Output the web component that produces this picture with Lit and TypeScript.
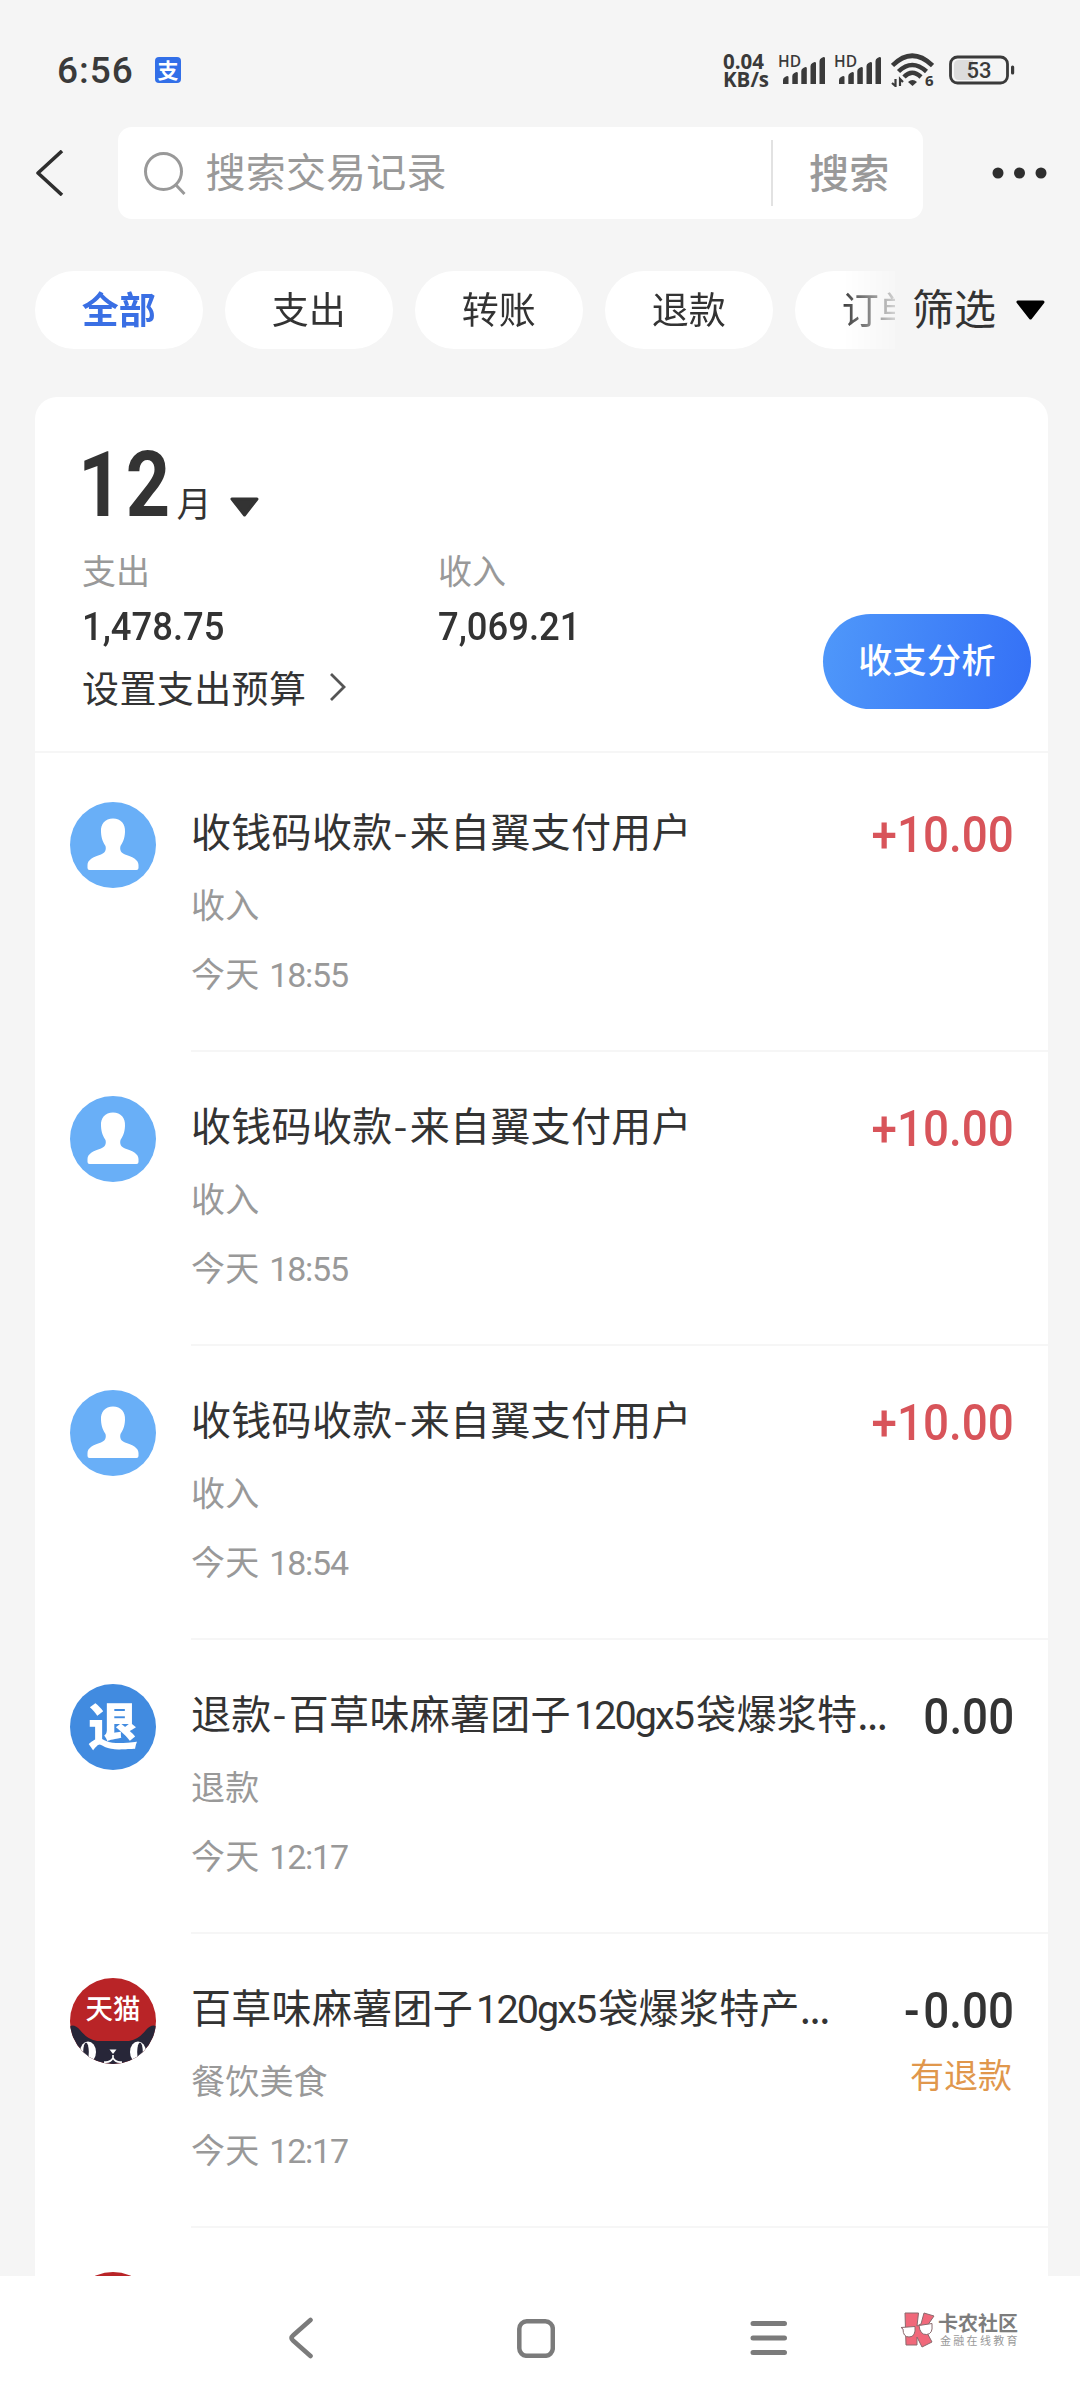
import { LitElement, html, svg, css, nothing } from "lit";
import { customElement, property } from "lit/decorators.js";

interface Bill {
  icon: "person" | "refund" | "tmall";
  title: unknown;
  category: string;
  time: string;
  amount: string;
  income?: boolean;
  note?: string;
}

const dash = html`<span class="dash">-</span>`;
const spec = html`<span class="latin">120gx5</span>`;
const dots = html`<span class="dots">...</span>`;
const collected = html`收钱码收款${dash}来自翼支付用户`;

const bills: Bill[] = [
  { icon: "person", title: collected, category: "收入", time: "18:55", amount: "+10.00", income: true },
  { icon: "person", title: collected, category: "收入", time: "18:55", amount: "+10.00", income: true },
  { icon: "person", title: collected, category: "收入", time: "18:54", amount: "+10.00", income: true },
  { icon: "refund", title: html`退款${dash}百草味麻薯团子${spec}袋爆浆特${dots}`, category: "退款", time: "12:17", amount: "0.00" },
  { icon: "tmall", title: html`百草味麻薯团子${spec}袋爆浆特产${dots}`, category: "餐饮美食", time: "12:17", amount: "-0.00", note: "有退款" },
  { icon: "tmall", title: "", category: "", time: "", amount: "" },
];

@customElement("bill-icon")
export class BillIcon extends LitElement {
  @property() kind: Bill["icon"] = "person";

  static styles = css`
    :host { display: block; width: 86px; height: 86px; }
    svg { display: block; }
    .badge {
      display: flex; align-items: center; justify-content: center;
      width: 86px; height: 86px; border-radius: 50%;
      background: #418be0; color: #fff;
      font: 900 50px/50px "Noto Sans CJK SC", sans-serif;
      box-sizing: border-box; padding-bottom: 8px;
    }
    .brand { font: 500 27.5px "Noto Sans CJK SC", sans-serif; fill: #fff; }
  `;

  render() {
    if (this.kind === "refund") return html`<div class="badge">退</div>`;
    if (this.kind === "tmall") {
      return html`<svg width="86" height="86" viewBox="0 0 86 86">
        <clipPath id="disc"><circle cx="43" cy="43" r="43" /></clipPath>
        <g clip-path="url(#disc)">
          <rect width="86" height="86" fill="#b92427" />
          <path d="M0 48Q5 46 10 52Q18 62 27 63H59Q68 62 76 52Q81 46 86 48V86H0Z" fill="#272638" />
          <ellipse cx="18" cy="74" rx="8" ry="10.5" fill="#fff" />
          <ellipse cx="16" cy="74" rx="2.8" ry="9.5" fill="#272638" />
          <ellipse cx="68" cy="74" rx="8" ry="10.5" fill="#fff" />
          <ellipse cx="70" cy="74" rx="2.8" ry="9.5" fill="#272638" />
          <path d="M39.5 71.5H46.5L43 76Z" fill="#fff" />
          <path d="M43 77V80Q40 85 34 84M43 80Q46 85 52 84" fill="none" stroke="#fff" stroke-width="1.6" />
        </g>
        ${svg`<text class="brand" x="43" y="41" text-anchor="middle">天猫</text>`}
      </svg>`;
    }
    return html`<svg width="86" height="86" viewBox="0 0 86 86">
      <circle cx="43" cy="43" r="43" fill="#69aff7" />
      <path d="M43 16.500C51 16.500 55.500 22 55 30C54.700 37 52.500 41 50.500 44C49.500 48 51 51 55 52.500C63 55 68.500 58 68.500 63V66Q68.500 68 66.500 68H19.500Q17.500 68 17.500 66V63C17.500 58 23 55 31 52.500C35 51 36.500 48 35.500 44C33.500 41 31.300 37 31 30C30.500 22 35 16.500 43 16.500Z" fill="#fff" />
    </svg>`;
  }
}

@customElement("bill-row")
export class BillRow extends LitElement {
  @property({ attribute: false }) bill!: Bill;

  static styles = css`
    :host { display: flex; height: 294px; padding-left: 35px; gap: 35px; }
    bill-icon { margin-top: 44px; flex: none; }
    .body {
      flex: 1; display: flex; justify-content: space-between;
      box-sizing: border-box; border-bottom: 2px solid #f6f6f6;
      padding: 44px 36px 0 0; white-space: nowrap;
    }
    .info, .money { display: flex; flex-direction: column; }
    .title { font-size: 40px; line-height: 56px; letter-spacing: 0.3px; color: #333; }
    .dash { margin: 0 2px 0 1px; }
    .dots { letter-spacing: -1.4px; }
    .latin { font-family: Roboto, sans-serif; font-size: 39.5px; line-height: 1; letter-spacing: -1.9px; margin: 0 3px 0 3px; }
    .sub { font-size: 34px; line-height: 48px; color: #999; margin-top: 21.5px; letter-spacing: 0.2px; }
    .time { font-family: Roboto, sans-serif; line-height: 1; letter-spacing: -1.2px; margin-left: 2px; }
    .money { align-items: flex-end; padding-top: 3px; }
    .amount {
      font: 500 49.500px/60px Roboto, sans-serif; color: #333;
      transform: scaleX(0.925); transform-origin: right; margin-right: -2px;
    }
    .minus { letter-spacing: 4px; }
    .income { color: #d8545a; }
    .note { font-size: 34px; line-height: 48px; margin-top: 8.5px; color: #e0974c; }
  `;

  render() {
    const b = this.bill;
    const negative = b.amount.startsWith("-");
    return html`
      <bill-icon .kind=${b.icon}></bill-icon>
      <div class="body">
        <div class="info">
          <div class="title">${b.title}</div>
          <div class="sub">${b.category}</div>
          ${b.time ? html`<div class="sub">今天 <span class="time">${b.time}</span></div>` : nothing}
        </div>
        <div class="money">
          <div class="amount ${b.income ? "income" : ""}">${negative
            ? html`<span class="minus">-</span>${b.amount.slice(1)}`
            : b.amount}</div>
          ${b.note ? html`<div class="note">${b.note}</div>` : nothing}
        </div>
      </div>
    `;
  }
}

const triangle = (color: string) => html`<svg class="tri" width="29" height="20" viewBox="0 0 29 20">
  <path d="M2 2H27L14.500 18Z" fill=${color} stroke=${color} stroke-width="3" stroke-linejoin="round" />
</svg>`;

const signal = html`<div class="signal">
  <span class="hd">HD</span>
  <svg width="43" height="27" viewBox="0 0 43 27" fill="#3a3a3a">
    ${[[0, 19], [9.3, 15], [18.3, 10], [27.500, 5], [36.500, 0]].map(
      ([x, y]) => svg`<path d=${`M${x} 27V${y + 4}Q${x} ${y + 2} ${x + 2} ${y + 1}L${x + 4} ${y}Q${x + 5.500} ${y} ${x + 5.500} ${y + 1}V27Z`} />`,
    )}
  </svg>
</div>`;

@customElement("app-root")
export class AppRoot extends LitElement {
  static styles = css`
    :host {
      display: flex; flex-direction: column; width: 1080px; height: 2400px;
      overflow: hidden; background: #f5f5f5; color: #333;
      font-family: "Noto Sans CJK SC", sans-serif;
    }
    svg { display: block; flex: none; }

    .status { display: flex; align-items: center; height: 40px; padding: 50px 65px 0 57px; color: #3a3a3a; }
    .clock { font: 500 37px/40px Roboto, sans-serif; letter-spacing: 1px; width: 98px; padding-top: 1px; }
    .pay {
      width: 26px; height: 26px; border-radius: 4px; background: #326fe8; color: #fff;
      font-size: 21px; font-weight: 700; line-height: 24px; text-align: center;
    }
    .sys { display: flex; align-items: center; margin-left: auto; }
    .rate { font: 700 20.5px/18.500px "Open Sans", sans-serif; width: 55px; white-space: nowrap; }
    .signal { width: 56px; height: 30px; display: grid; }
    .signal > * { grid-area: 1 / 1; }
    .hd { font: 600 15.5px/15px "Open Sans", sans-serif; margin-top: -1px; }
    .signal svg { margin: 2px 0 0 5px; }
    .wifi { margin: 0 15px 0 1px; }
    .band { font: 700 15px "Open Sans", sans-serif; fill: #3a3a3a; stroke: none; }
    .level { font: 500 22px Roboto, sans-serif; fill: #3a3a3a; }

    .top { display: flex; align-items: center; height: 92px; margin-top: 37px; padding: 0 33px 0 35px; }
    .search {
      display: flex; align-items: center; width: 805px; height: 92px; margin-left: 54px;
      box-sizing: border-box; border-radius: 14px; background: #fff; padding-left: 25px; color: #999; font-size: 40px;
    }
    .placeholder { margin-left: 18.5px; flex: 1; letter-spacing: 0.2px; line-height: 56px; padding-bottom: 6px; }
    .go {
      width: 152px; height: 66px; box-sizing: border-box; border-left: 2px solid #e2e2e2; padding-left: 36px;
      font-weight: 500; line-height: 63px; letter-spacing: 0.3px;
    }
    .more { margin-left: auto; }

    .filters { display: flex; align-items: center; height: 78px; margin-top: 52px; padding-left: 35px; }
    .chips {
      display: flex; gap: 22.500px; width: 860px; overflow: hidden;
      -webkit-mask-image: linear-gradient(to right, #000 805px, transparent 872px);
      mask-image: linear-gradient(to right, #000 805px, transparent 872px);
    }
    .chip {
      flex: none; width: 167.500px; height: 78px; border-radius: 39px; background: #fff;
      font-size: 37px; line-height: 74px; text-align: center;
    }
    .active { color: #3a6fe4; font-weight: 700; }
    .filter { display: flex; align-items: center; font-size: 42px; line-height: 78px; margin-left: 17px; }
    .filter span { padding-bottom: 6px; }
    .filter .tri { margin-left: 20px; }

    .card {
      height: 1879px; margin: 48px 32px 0 35px; border-radius: 22px 22px 0 0; overflow: hidden; background: #fff;
    }
    .summary {
      display: flex; align-items: flex-start; height: 356px; box-sizing: border-box;
      border-bottom: 2px solid #f6f6f6; padding: 50px 17px 0 47px; margin-bottom: 5px;
    }
    .figures { flex: 1; }
    .month { display: flex; align-items: flex-end; height: 80px; }
    .digits {
      font: 700 90px/82px Roboto, sans-serif; letter-spacing: 4px; margin-left: -4px;
      transform: scaleX(0.86); transform-origin: left; width: 98.500px; flex: none; white-space: nowrap;
    }
    .unit { font-size: 35px; line-height: 44px; width: 31.5px; padding-bottom: 3px; }
    .month .tri { margin: 0 0 10px 22px; }
    .totals { display: flex; margin-top: 20px; }
    .total { width: 356px; }
    .label { font-size: 34px; line-height: 46px; color: #999; }
    .value {
      font: 500 39.500px/46px Roboto, sans-serif; margin-top: 10.5px;
      transform: scaleX(0.922); transform-origin: left;
    }
    .budget { display: flex; align-items: center; font-size: 37px; line-height: 50px; letter-spacing: 0.4px; margin-top: 12.5px; gap: 21px; }
    .analyse {
      width: 208px; height: 95px; border-radius: 48px; margin-top: 167px;
      background: linear-gradient(100deg, #4f98fa, #3470f6); color: #fff;
      font-size: 34px; font-weight: 500; line-height: 89px; text-align: center; letter-spacing: 0.4px;
    }

    .nav { display: flex; align-items: center; height: 124px; box-sizing: border-box; padding: 0 0 0 287px; background: #fff; }
    .home { margin-left: 202px; }
    .menu { margin-left: 195px; }
    .mark { display: flex; align-items: center; gap: 3px; margin: -16px 0 0 112px; }
    .names { color: #7d7d7d; white-space: nowrap; }
    .name { font-size: 20px; font-weight: 700; line-height: 20px; }
    .motto { font-size: 11px; line-height: 13px; letter-spacing: 2.3px; color: #999; padding-left: 2px; margin-top: 1px; }
  `;

  render() {
    return html`
      <div class="status">
        <div class="clock">6:56</div>
        <div class="pay">支</div>
        <div class="sys">
          <div class="rate">0.04<br />KB/s</div>
          ${signal}${signal}
          <svg class="wifi" width="43" height="34" viewBox="0 0 43 34" fill="none" stroke="#3a3a3a" stroke-width="4.500">
            <path d="M1.500 12.500Q21 -7 41.500 12.500" />
            <path d="M7.500 18.500Q21 5.500 35.500 18.500" />
            <path d="M13 24Q21 15.500 30 24" />
            <path d="M17 29Q21.500 25 26 29L21.500 33Z" fill="#3a3a3a" stroke="none" />
            <path d="M4.500 26V33L1 30M9 33V26L12 29" stroke-width="2.200" />
            <text class="band" x="34" y="33">6</text>
          </svg>
          <svg width="66" height="30" viewBox="0 0 66 30">
            <rect x="1.500" y="2" width="57" height="26" rx="7" fill="none" stroke="#3a3a3a" stroke-width="2.800" />
            <path d="M10 5H24V25H10Q5 25 5 20V10Q5 5 10 5Z" fill="#dcdcdc" />
            <rect x="62" y="10.500" width="3.200" height="9" rx="1.500" fill="#3a3a3a" />
            <text class="level" x="30" y="23" text-anchor="middle">53</text>
          </svg>
        </div>
      </div>

      <div class="top">
        <svg width="29" height="46" viewBox="0 0 29 46" fill="none" stroke="#2e2e2e" stroke-width="3.600">
          <path d="M27 1L3 23L27 45" stroke-linejoin="round" />
        </svg>
        <div class="search">
          <svg width="44" height="44" viewBox="0 0 44 44" fill="none" stroke="#999" stroke-width="3">
            <circle cx="20.500" cy="20.500" r="18" />
            <path d="M32 33L41.500 43" />
          </svg>
          <div class="placeholder">搜索交易记录</div>
          <div class="go">搜索</div>
        </div>
        <svg class="more" width="55" height="12" viewBox="0 0 55 12" fill="#2e2e2e">
          <circle cx="6" cy="6" r="5.500" /><circle cx="27.500" cy="6" r="5.500" /><circle cx="49" cy="6" r="5.500" />
        </svg>
      </div>

      <div class="filters">
        <div class="chips">
          ${["全部", "支出", "转账", "退款", "订单"].map(
            (name, i) => html`<div class="chip ${i === 0 ? "active" : ""}">${name}</div>`,
          )}
        </div>
        <div class="filter"><span>筛选</span>${triangle("#000")}</div>
      </div>

      <div class="card">
        <div class="summary">
          <div class="figures">
            <div class="month">
              <div class="digits">12</div>
              <div class="unit">月</div>
              ${triangle("#333")}
            </div>
            <div class="totals">
              <div class="total"><div class="label">支出</div><div class="value">1,478.75</div></div>
              <div class="total"><div class="label">收入</div><div class="value">7,069.21</div></div>
            </div>
            <div class="budget">
              设置支出预算
              <svg width="20" height="30" viewBox="0 0 20 30" fill="none" stroke="#555" stroke-width="2.800">
                <path d="M4 2L17 15L4 28" />
              </svg>
            </div>
          </div>
          <div class="analyse">收支分析</div>
        </div>
        ${bills.map((bill) => html`<bill-row .bill=${bill}></bill-row>`)}
      </div>

      <div class="nav">
        <svg width="28" height="42" viewBox="0 0 28 42" fill="none" stroke="#7b7b7b" stroke-width="4.600" stroke-linecap="round">
          <path d="M23.500 3L6 18.500Q3 21 6 23.500L23.500 39" />
        </svg>
        <svg class="home" width="38" height="39" viewBox="0 0 38 39" fill="none" stroke="#7b7b7b" stroke-width="4.500">
          <rect x="2.300" y="2.300" width="33.500" height="34.500" rx="7.500" />
        </svg>
        <svg class="menu" width="38" height="36" viewBox="0 0 38 36" stroke="#7b7b7b" stroke-width="5" stroke-linecap="round">
          <path d="M3 3.500H34.500M3 18H34.500M3 32.500H34.500" />
        </svg>
        <div class="mark">
          <svg width="35" height="36" viewBox="0 0 35 36" stroke="#8a6a6e" stroke-width="1">
            <path d="M5 1H18.500L17 14L21 12L24 1L34 4L25 17L32 30L22 35L17 25V33L6 33Z" fill="#f0687a" />
            <path d="M1 15.500L15 14.500Q16 25 9 25Q3 25 3 17ZM19 13.500L32 11.500V13Q33 22 26.500 22.500Q20 23 19 13.500Z" fill="#fff" />
          </svg>
          <div class="names">
            <div class="name">卡农社区</div>
            <div class="motto">金融在线教育</div>
          </div>
        </div>
      </div>
    `;
  }
}
